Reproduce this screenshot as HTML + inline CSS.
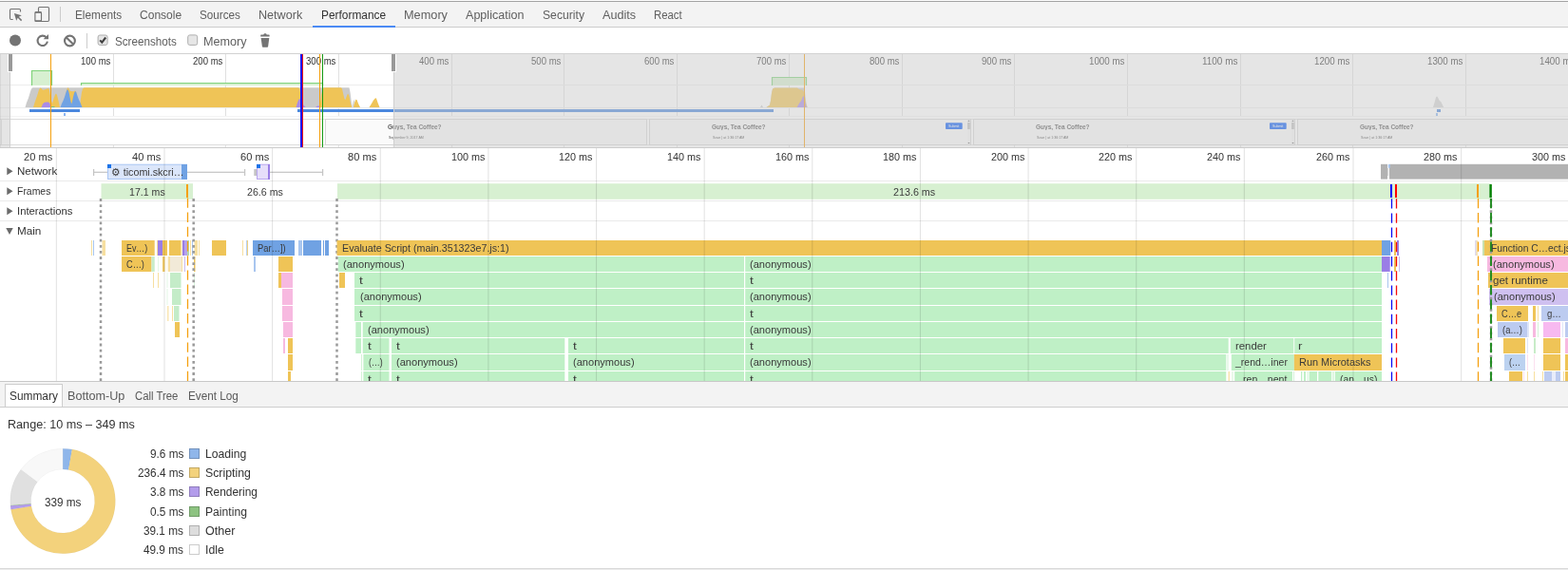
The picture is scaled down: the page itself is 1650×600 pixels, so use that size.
<!DOCTYPE html><html><head><meta charset="utf-8"><title>DevTools Performance</title><style>
html,body{margin:0;padding:0}
body{width:1650px;height:600px;overflow:hidden;position:relative;background:#fff;font-family:"Liberation Sans", sans-serif;font-size:12px;color:#333}
.abs{position:absolute}
.t{position:absolute;white-space:nowrap;line-height:16px}
svg{position:absolute;left:0;top:0;overflow:visible}
svg text{font-family:"Liberation Sans", sans-serif}
</style></head><body><div id="root" style="position:absolute;left:0;top:0;width:1650px;height:600px;overflow:hidden;will-change:transform">
<div class="abs" style="left:0px;top:0px;width:1650px;height:1px;background:#fdfdfd"></div>
<div class="abs" style="left:0px;top:1px;width:1650px;height:1px;background:#a3a3a3"></div>
<div class="abs" style="left:0px;top:2px;width:1650px;height:26px;background:#f3f3f3"></div>
<div class="abs" style="left:0px;top:28px;width:1650px;height:1px;background:#ccc"></div>
<div class="t" style="left:79.20px;top:8.00px;font-size:12.3px;color:#5f5f5f;transform:scaleX(0.9597);transform-origin:0 0">Elements</div>
<div class="t" style="left:147.10px;top:8.00px;font-size:12.3px;color:#5f5f5f;transform:scaleX(0.9795);transform-origin:0 0">Console</div>
<div class="t" style="left:210.00px;top:8.00px;font-size:12.3px;color:#5f5f5f;transform:scaleX(0.9507);transform-origin:0 0">Sources</div>
<div class="t" style="left:272.40px;top:8.00px;font-size:12.3px;color:#5f5f5f;transform:scaleX(1.0242);transform-origin:0 0">Network</div>
<div class="t" style="left:338.30px;top:8.00px;font-size:12.3px;color:#333;transform:scaleX(0.9672);transform-origin:0 0">Performance</div>
<div class="t" style="left:425.20px;top:8.00px;font-size:12.3px;color:#5f5f5f;transform:scaleX(1.0355);transform-origin:0 0">Memory</div>
<div class="t" style="left:490.40px;top:8.00px;font-size:12.3px;color:#5f5f5f;transform:scaleX(1.0221);transform-origin:0 0">Application</div>
<div class="t" style="left:571.00px;top:8.00px;font-size:12.3px;color:#5f5f5f;transform:scaleX(0.9905);transform-origin:0 0">Security</div>
<div class="t" style="left:634.20px;top:8.00px;font-size:12.3px;color:#5f5f5f;transform:scaleX(1.0296);transform-origin:0 0">Audits</div>
<div class="t" style="left:688.10px;top:8.00px;font-size:12.3px;color:#5f5f5f;transform:scaleX(0.9245);transform-origin:0 0">React</div>
<div class="abs" style="left:329px;top:27px;width:87px;height:2px;background:#4a8af4"></div>
<div class="abs" style="left:0px;top:56px;width:1650px;height:1px;background:#d2d2d2"></div>
<div class="t" style="left:120.60px;top:35.50px;font-size:12.3px;color:#5f5f5f;transform:scaleX(0.9479);transform-origin:0 0">Screenshots</div>
<div class="t" style="left:214.10px;top:35.50px;font-size:12.3px;color:#5f5f5f;transform:scaleX(1.0265);transform-origin:0 0">Memory</div>
<svg width="1650" height="56" viewBox="0 0 1650 56">
<path d="M13.700 20.500H11.700Q10.500 20.500 10.500 19.300V10.700Q10.500 9.500 11.700 9.500H20.300Q21.500 9.500 21.500 10.700V12.600" fill="none" stroke="#747474" stroke-width="1.150"/>
<path d="M14.900 13.900 L22.800 16.300 L19.800 17.700 L23.200 21.100 L22.100 22.200 L18.700 18.800 L17.200 21.800 Z" fill="#747474"/>
<rect x="40.500" y="7.500" width="11" height="15" rx="1.200" fill="none" stroke="#747474" stroke-width="1.150"/>
<rect x="36.900" y="12.900" width="6.600" height="9.600" rx="1.200" fill="#f3f3f3" stroke="#747474" stroke-width="1.150"/>
<rect x="36.600" y="12.300" width="7.200" height="1.500" rx="0.600" fill="#747474"/>
<rect x="36.600" y="21.200" width="7.200" height="1.600" rx="0.600" fill="#747474"/>
<rect x="63" y="7" width="1" height="16" fill="#ccc"/>
<circle cx="16" cy="42.600" r="6" fill="#747474"/>
<path d="M48.700 39.400 A5.200 5.200 0 1 0 49.900 43.600" fill="none" stroke="#747474" stroke-width="2.100"/>
<path d="M51 35.900 V41.300 H45.600 Z" fill="#747474"/>
<circle cx="73.450" cy="43" r="5.400" fill="none" stroke="#747474" stroke-width="2.100"/>
<path d="M69.600 39.200 L77.300 46.800" stroke="#747474" stroke-width="2.100"/>
<rect x="91" y="35" width="1" height="16" fill="#ccc"/>
<rect x="103.100" y="37" width="10" height="10.400" rx="2" fill="#e6e6e6" stroke="#aeaeae"/>
<path d="M105.200 42.400 L107.300 44.700 L111.200 39.500" fill="none" stroke="#404040" stroke-width="2.100"/>
<rect x="197.700" y="36.900" width="10" height="10.500" rx="2" fill="#e6e6e6" stroke="#aeaeae"/>
<path d="M274.200 38.400 V36.900 Q274.200 36.400 274.800 36.400 H277.300 Q277.600 35.200 278.600 35.200 H279.400 Q280.400 35.200 280.700 36.400 H283 Q283.600 36.400 283.600 36.900 V38.400 Z" fill="#747474"/>
<path d="M274.600 40 H283.300 L282.100 49 Q282 49.800 281.200 49.800 H276.800 Q276 49.800 275.900 49 Z" fill="#747474"/>
</svg>
<svg width="1650" height="100" viewBox="0 56 1650 100" style="top:56px" shape-rendering="crispEdges">
<rect x="0" y="57" width="1650" height="98" fill="#fff"/>
<rect x="119" y="57" width="1" height="98" fill="#e0e0e0"/>
<rect x="237" y="57" width="1" height="98" fill="#e0e0e0"/>
<rect x="356" y="57" width="1" height="98" fill="#e0e0e0"/>
<rect x="475" y="57" width="1" height="98" fill="#e0e0e0"/>
<rect x="593" y="57" width="1" height="98" fill="#e0e0e0"/>
<rect x="712" y="57" width="1" height="98" fill="#e0e0e0"/>
<rect x="830" y="57" width="1" height="98" fill="#e0e0e0"/>
<rect x="949" y="57" width="1" height="98" fill="#e0e0e0"/>
<rect x="1067" y="57" width="1" height="98" fill="#e0e0e0"/>
<rect x="1186" y="57" width="1" height="98" fill="#e0e0e0"/>
<rect x="1305" y="57" width="1" height="98" fill="#e0e0e0"/>
<rect x="1423" y="57" width="1" height="98" fill="#e0e0e0"/>
<rect x="1542" y="57" width="1" height="98" fill="#e0e0e0"/>
<rect x="1660" y="57" width="1" height="98" fill="#e0e0e0"/>
<rect x="0" y="89" width="1650" height="1" fill="#ededed"/>
<rect x="0" y="113" width="1650" height="1" fill="#ededed"/>
<rect x="0" y="122" width="1650" height="1" fill="#f3f3f3"/>
</svg>
<svg width="1650" height="100" viewBox="0 56 1650 100" style="top:56px">
<path d="M33 90 V74 H55 V90 Z" fill="#d7f0d1"/>
<path d="M33.5 90 V74.5 H54.5 V90" fill="none" stroke="#7fd27a" stroke-width="1.200"/>
<path d="M85 90 V87 H340 V90 Z" fill="#d7f0d1"/>
<path d="M85.5 90 V87.5 H339.5 V90" fill="none" stroke="#7fd27a" stroke-width="1.200"/>
<path d="M812 90 V81 H849 V90 Z" fill="#d7f0d1"/>
<path d="M812.5 90 V81.5 H848.5 V90" fill="none" stroke="#7fd27a" stroke-width="1.200"/>
<path d="M26.500 113 L28 108 L30 103 L31.500 98 L33 93.500 L34.500 92.300 L367.500 92.300 L368.500 97 L370.500 113 Z" fill="#cacaca"/>
<path d="M35 113 L36.500 108 L39 101 L41 94.500 L42.200 92.500 L43.500 93 L45 94.800 L46.500 94.600 L48 94 L50 93.300 L51.500 93.200 L52.500 98 L54 106 L55 109 L56.500 104 L58 99.500 L59 98.500 L60 100 L61.500 106 L63 113 Z" fill="#efc457"/>
<path d="M67 113 L68.500 103 L70 95 L71 92.500 L72 92.500 L73 94.500 L74.200 96 L77.500 96.300 L79 95.600 L80 96.500 L81 100 L82 113 Z" fill="#efc457"/>
<path d="M84 113 L85 104 L86 97 L87 93.500 L88.500 92.300 L314 92.300 L315.300 93.500 L316.500 100 L318 113 Z" fill="#efc457"/>
<path d="M63.500 113 L65 109 L66.500 106 L68 102 L69.500 97 L70.500 94.500 L71.500 94.200 L72.500 97 L73.500 102 L74.500 107 L75.200 109.500 L76 107 L77 102 L78.200 97.500 L79.200 96 L80.200 97 L81.500 101 L83 105 L84.500 108 L86.500 113 Z" fill="#70a2e3"/>
<path d="M43.500 113 L45 109.500 L46.500 108 L48.500 107.600 L51 107.500 L52.500 109 L53.500 113 Z" fill="#a98be8"/>
<path d="M53 113 L54 112 L57 112 L58 113 Z" fill="#7cc07a"/>
<path d="M311.500 113 L313 108 L314.500 104.500 L315.500 104 L317 107 L319 110 L321.500 113 Z" fill="#a98be8"/>
<path d="M332 113 L334 111.500 L336 111.500 L338 113 Z" fill="#a98be8"/>
<path d="M336.500 113 L338 100 L339.500 93.500 L341 92.300 L359 92.300 L360 93.500 L361 98 L362.500 104 L363.500 105 L364.500 102 L366 98.500 L367 100 L368 104 L369 109 L370.500 113 Z" fill="#efc457"/>
<path d="M371 113 L373 108 L374.500 104.800 L375.500 105 L377 109 L379 113 Z M388.500 113 L391 109 L393 105.500 L395 103.200 L396 103.500 L397.500 108 L399.500 113 Z" fill="#efc457"/>
<path d="M370 113 L371.500 107 L373.500 104 L372.500 110 L372 113 Z" fill="#d8d8d8"/>
<path d="M800 113 L801.500 110.500 L803 113 Z" fill="#cacaca"/>
<path d="M806.500 113 L810 110.500 L811 106 L812 98 L813 93.500 L815 92.400 L846 92.400 L847 97 L848 106 L849 111 L850 113 Z" fill="#cacaca"/>
<path d="M806.500 113 L810 110.500 L811 106 L812 98 L813 93.500 L815 92.400 L839 92.400 L841 94 L844.500 94.800 L846 97 L847 102 L848 109 L849 113 Z" fill="#efc457"/>
<path d="M838.500 113 L840 110.500 L841.500 108 L843 106.500 L844.500 102.500 L845.500 100.800 L846.500 104 L847.500 109 L848.500 113 Z" fill="#a98be8"/>
<path d="M1508 113 L1509.500 108 L1511 102.500 L1512 101.300 L1513 102.500 L1514.500 105.500 L1516.500 107.500 L1518 110.500 L1519.200 113 Z" fill="#d4d4d4"/>
</svg>
<svg width="1650" height="100" viewBox="0 56 1650 100" style="top:56px" shape-rendering="crispEdges">
<rect x="31" y="115" width="53" height="3" fill="#4b88de"/>
<rect x="67" y="119" width="2" height="3" fill="#8ab4f0"/>
<rect x="313" y="115" width="501" height="3" fill="#4b88de"/>
<rect x="316" y="119" width="1" height="2" fill="#8ab4f0"/>
<rect x="1512" y="115" width="4" height="3" fill="#4b88de"/>
<rect x="1511" y="119" width="2" height="3" fill="#8ab4f0"/>
<rect x="0" y="123" width="1650" height="32" fill="#fff"/>
<rect x="0" y="125" width="1650" height="1" fill="#e4e4e4"/>
<rect x="0" y="152" width="1650" height="1" fill="#e4e4e4"/>
<rect x="1.500" y="125.500" width="338" height="27" fill="#fff" stroke="#dcdcdc"/>
<g shape-rendering="auto">
<rect x="342.5" y="125.500" width="338" height="27" fill="#fafafa" stroke="#d6d6d6"/>
<rect x="683.5" y="125.500" width="338" height="27" fill="#fafafa" stroke="#d6d6d6"/>
<rect x="1024.5" y="125.500" width="338" height="27" fill="#fafafa" stroke="#d6d6d6"/>
<rect x="1365.5" y="125.500" width="338" height="27" fill="#fafafa" stroke="#d6d6d6"/>
<rect x="995" y="129.300" width="17.700" height="6.800" rx="0.800" fill="#0a5cf5"/>
<rect x="1018.1" y="126.5" width="2.7" height="25.5" fill="#f4f4f4"/>
<rect x="1018.1" y="129" width="2.7" height="7" fill="#bcbcbc"/>
<path d="M1018.3 127.800 l1.200 -1.300 l1.200 1.300 Z M1018.3 150 l1.200 1.300 l1.200 -1.300 Z" fill="#555"/>
<rect x="1336" y="129.300" width="17.700" height="6.800" rx="0.800" fill="#0a5cf5"/>
<rect x="1359.1" y="126.5" width="2.7" height="25.5" fill="#f4f4f4"/>
<rect x="1359.1" y="129" width="2.7" height="7" fill="#bcbcbc"/>
<path d="M1359.3 127.800 l1.200 -1.300 l1.200 1.300 Z M1359.3 150 l1.200 1.300 l1.200 -1.300 Z" fill="#555"/>
</g>
<rect x="119" y="153" width="1" height="2" fill="#e0e0e0"/>
<rect x="237" y="153" width="1" height="2" fill="#e0e0e0"/>
<rect x="356" y="153" width="1" height="2" fill="#e0e0e0"/>
<rect x="475" y="153" width="1" height="2" fill="#e0e0e0"/>
<rect x="593" y="153" width="1" height="2" fill="#e0e0e0"/>
<rect x="712" y="153" width="1" height="2" fill="#e0e0e0"/>
<rect x="830" y="153" width="1" height="2" fill="#e0e0e0"/>
<rect x="949" y="153" width="1" height="2" fill="#e0e0e0"/>
<rect x="1067" y="153" width="1" height="2" fill="#e0e0e0"/>
<rect x="1186" y="153" width="1" height="2" fill="#e0e0e0"/>
<rect x="1305" y="153" width="1" height="2" fill="#e0e0e0"/>
<rect x="1423" y="153" width="1" height="2" fill="#e0e0e0"/>
<rect x="1542" y="153" width="1" height="2" fill="#e0e0e0"/>
<rect x="1660" y="153" width="1" height="2" fill="#e0e0e0"/>
</svg>
<div class="t" style="left:408px;top:129.800px;font-size:13px;line-height:13px;font-weight:bold;color:#555;transform:scale(0.5);transform-origin:0 0">Guys, Tea Coffee?</div>
<div class="t" style="left:409px;top:142.500px;font-size:12px;line-height:12px;color:#444;transform:scale(0.300,0.340);transform-origin:0 0">September 9, 2017 AM</div>
<div class="t" style="left:749px;top:129.800px;font-size:13px;line-height:13px;font-weight:bold;color:#555;transform:scale(0.5);transform-origin:0 0">Guys, Tea Coffee?</div>
<div class="t" style="left:750px;top:142.500px;font-size:12px;line-height:12px;color:#444;transform:scale(0.300,0.340);transform-origin:0 0">Save | at 1:36:17 AM</div>
<div class="t" style="left:998px;top:131px;font-size:12px;line-height:12px;color:#fff;transform:scale(0.3);transform-origin:0 0">Submit</div>
<div class="t" style="left:1090px;top:129.800px;font-size:13px;line-height:13px;font-weight:bold;color:#555;transform:scale(0.5);transform-origin:0 0">Guys, Tea Coffee?</div>
<div class="t" style="left:1091px;top:142.500px;font-size:12px;line-height:12px;color:#444;transform:scale(0.300,0.340);transform-origin:0 0">Save | at 1:36:17 AM</div>
<div class="t" style="left:1339px;top:131px;font-size:12px;line-height:12px;color:#fff;transform:scale(0.3);transform-origin:0 0">Submit</div>
<div class="t" style="left:1431px;top:129.800px;font-size:13px;line-height:13px;font-weight:bold;color:#555;transform:scale(0.5);transform-origin:0 0">Guys, Tea Coffee?</div>
<div class="t" style="left:1432px;top:142.500px;font-size:12px;line-height:12px;color:#444;transform:scale(0.300,0.340);transform-origin:0 0">Save | at 1:36:17 AM</div>
<div class="t" style="left:85.30px;top:55.80px;font-size:10.6px;color:#333;transform:scaleX(0.9036);transform-origin:0 0">100 ms</div>
<div class="t" style="left:203.30px;top:55.80px;font-size:10.6px;color:#333;transform:scaleX(0.9036);transform-origin:0 0">200 ms</div>
<div class="t" style="left:322.30px;top:55.80px;font-size:10.6px;color:#333;transform:scaleX(0.9036);transform-origin:0 0">300 ms</div>
<div class="t" style="left:441.30px;top:55.80px;font-size:10.6px;color:#333;transform:scaleX(0.9036);transform-origin:0 0">400 ms</div>
<div class="t" style="left:559.30px;top:55.80px;font-size:10.6px;color:#333;transform:scaleX(0.9036);transform-origin:0 0">500 ms</div>
<div class="t" style="left:678.30px;top:55.80px;font-size:10.6px;color:#333;transform:scaleX(0.9036);transform-origin:0 0">600 ms</div>
<div class="t" style="left:796.30px;top:55.80px;font-size:10.6px;color:#333;transform:scaleX(0.9036);transform-origin:0 0">700 ms</div>
<div class="t" style="left:915.30px;top:55.80px;font-size:10.6px;color:#333;transform:scaleX(0.9036);transform-origin:0 0">800 ms</div>
<div class="t" style="left:1033.30px;top:55.80px;font-size:10.6px;color:#333;transform:scaleX(0.9036);transform-origin:0 0">900 ms</div>
<div class="t" style="left:1146.30px;top:55.80px;font-size:10.6px;color:#333;transform:scaleX(0.9203);transform-origin:0 0">1000 ms</div>
<div class="t" style="left:1265.30px;top:55.80px;font-size:10.6px;color:#333;transform:scaleX(0.9383);transform-origin:0 0">1100 ms</div>
<div class="t" style="left:1383.30px;top:55.80px;font-size:10.6px;color:#333;transform:scaleX(0.9203);transform-origin:0 0">1200 ms</div>
<div class="t" style="left:1502.30px;top:55.80px;font-size:10.6px;color:#333;transform:scaleX(0.9203);transform-origin:0 0">1300 ms</div>
<div class="t" style="left:1620.30px;top:55.80px;font-size:10.6px;color:#333;transform:scaleX(0.9203);transform-origin:0 0">1400 ms</div>
<div class="abs" style="left:53px;top:57px;width:1.3px;height:98px;background:#f5a010"></div>
<div class="abs" style="left:316px;top:57px;width:2px;height:98px;background:#1414f0"></div>
<div class="abs" style="left:318px;top:57px;width:1.2px;height:98px;background:#f01414"></div>
<div class="abs" style="left:336px;top:57px;width:1.2px;height:98px;background:#f5a010"></div>
<div class="abs" style="left:339px;top:57px;width:1.4px;height:98px;background:#159a15"></div>
<div class="abs" style="left:846px;top:57px;width:1.3px;height:98px;background:#f5a010"></div>
<div class="abs" style="left:0px;top:57px;width:10px;height:98px;background:rgba(202,202,202,0.49)"></div>
<div class="abs" style="left:0px;top:57px;width:1px;height:98px;background:rgba(0,0,0,0.06)"></div>
<div class="abs" style="left:415px;top:57px;width:1235px;height:98px;background:rgba(202,202,202,0.49)"></div>
<div class="abs" style="left:10px;top:57px;width:1px;height:98px;background:#cfcfcf"></div>
<div class="abs" style="left:414px;top:57px;width:1px;height:98px;background:#cfcfcf"></div>
<div class="abs" style="left:8px;top:57px;width:6px;height:19px;background:#fff"></div>
<div class="abs" style="left:9px;top:57px;width:4px;height:18px;background:#999"></div>
<div class="abs" style="left:411px;top:57px;width:6px;height:19px;background:#fff"></div>
<div class="abs" style="left:412px;top:57px;width:4px;height:18px;background:#999"></div>
<div class="abs" style="left:0px;top:155px;width:1650px;height:1px;background:#ccc"></div>
<svg width="1650" height="245" viewBox="0 156 1650 245" style="top:156px">
<rect x="0" y="156" width="1650" height="245" fill="#fff"/>
<rect x="0" y="190" width="1650" height="1" fill="#eaeaea"/>
<rect x="0" y="211" width="1650" height="1" fill="#eaeaea"/>
<rect x="0" y="232" width="1650" height="1" fill="#eaeaea"/>
<rect x="98" y="178" width="1.2" height="7" fill="#c4c4c4"/>
<rect x="98" y="180.7" width="16" height="1.2" fill="#c4c4c4"/>
<rect x="197" y="180.7" width="61" height="1.2" fill="#c4c4c4"/>
<rect x="257" y="178" width="1.2" height="7" fill="#c4c4c4"/>
<rect x="113.500" y="173.200" width="83" height="15.300" fill="#dbe6fa" stroke="#a9c5f3"/>
<rect x="191" y="173" width="6" height="16" fill="#70a2e3"/>
<rect x="113" y="173" width="4" height="4" fill="#1a73e8"/>
<rect x="267.3" y="178" width="2.9" height="7" fill="#c4c4c4"/>
<rect x="284" y="180.7" width="56" height="1.2" fill="#c4c4c4"/>
<rect x="339" y="178" width="1.2" height="7" fill="#c4c4c4"/>
<rect x="270.500" y="173.200" width="13" height="15.300" fill="#e6defa" stroke="#b8a6ee"/>
<rect x="282" y="173" width="2" height="16" fill="#9a7ee6"/>
<rect x="270" y="173" width="4" height="4" fill="#1a73e8"/>
<rect x="1453" y="172.8" width="7" height="15.8" fill="#b2b2b2"/>
<rect x="1462" y="172.8" width="188" height="15.8" fill="#b2b2b2"/>
<rect x="1460.8" y="173" width="2" height="3.8" fill="#a8c6ef"/>
<rect x="1460" y="177" width="1.3" height="8" fill="#d8d8d8"/>
<rect x="106.5" y="193.2" width="96.5" height="16.6" fill="#d7f0d1"/>
<rect x="355" y="193.2" width="1213.7" height="16.6" fill="#d7f0d1"/>
<line x1="354.500" y1="209.100" x2="354.500" y2="401" stroke="#9a9a9a" stroke-width="2.500" stroke-dasharray="2.800,3.300"/>
<rect x="96" y="253" width="1" height="16" fill="#f7dfa0"/>
<rect x="98" y="253" width="1" height="16" fill="#a8c6ef"/>
<rect x="107.5" y="253" width="3.5" height="16" fill="#f7dfa0"/>
<rect x="128" y="253" width="34.7" height="16" fill="#efc457"/>
<rect x="165" y="253" width="1" height="16" fill="#f7dfa0"/>
<rect x="166" y="253" width="5" height="16" fill="#9a7ee6"/>
<rect x="171" y="253" width="5" height="16" fill="#efc457"/>
<rect x="178" y="253" width="12.5" height="16" fill="#efc457"/>
<rect x="190.5" y="253" width="1" height="16" fill="#f7dfa0"/>
<rect x="192" y="253" width="2" height="16" fill="#9a7ee6"/>
<rect x="194" y="253" width="3" height="16" fill="#b5a3ee"/>
<rect x="197" y="253" width="2" height="16" fill="#b8d8a8"/>
<rect x="200" y="253" width="1" height="16" fill="#f7dfa0"/>
<rect x="202" y="253" width="1" height="16" fill="#a8c6ef"/>
<rect x="204.5" y="253" width="3.5" height="16" fill="#f7dfa0"/>
<rect x="209" y="253" width="1" height="16" fill="#f7dfa0"/>
<rect x="223" y="253" width="15" height="16" fill="#efc457"/>
<rect x="255" y="253" width="1" height="16" fill="#f7dfa0"/>
<rect x="259" y="253" width="0.8" height="16" fill="#a8c6ef"/>
<rect x="260" y="253" width="1" height="16" fill="#f0d080"/>
<rect x="266" y="253" width="44" height="16" fill="#70a2e3"/>
<rect x="314" y="253" width="4" height="16" fill="#a8c6ef"/>
<rect x="319" y="253" width="19" height="16" fill="#70a2e3"/>
<rect x="340" y="253" width="1" height="16" fill="#70a2e3"/>
<rect x="342" y="253" width="4" height="16" fill="#70a2e3"/>
<rect x="128" y="270" width="31.5" height="16" fill="#efc457"/>
<rect x="159.5" y="270" width="3.2" height="16" fill="#c8ecc8"/>
<rect x="166" y="270" width="1" height="16" fill="#e4f7e6"/>
<rect x="171" y="270" width="2.5" height="16" fill="#eec868"/>
<rect x="175.5" y="270" width="1" height="16" fill="#faf0d8"/>
<rect x="177" y="270" width="2" height="16" fill="#f7dfa0"/>
<rect x="179" y="270" width="12" height="16" fill="#f2ead8"/>
<rect x="191" y="270" width="1" height="16" fill="#f7dfa0"/>
<rect x="194" y="270" width="1" height="16" fill="#c9baf1"/>
<rect x="204" y="270" width="1.5" height="16" fill="#efc457"/>
<rect x="267" y="270" width="2" height="16" fill="#a8c6ef"/>
<rect x="293" y="270" width="15" height="16" fill="#efc457"/>
<rect x="161" y="287" width="1" height="16" fill="#f7dfa0"/>
<rect x="166" y="287" width="1" height="16" fill="#f7dfa0"/>
<rect x="175.5" y="287" width="1" height="16" fill="#e4f7e6"/>
<rect x="179" y="287" width="11.5" height="16" fill="#c4ecc8"/>
<rect x="204" y="287" width="1" height="16" fill="#d8f4dc"/>
<rect x="293" y="287" width="3" height="16" fill="#efc457"/>
<rect x="296" y="287" width="12" height="16" fill="#f7b9e0"/>
<rect x="175.5" y="304" width="1" height="17" fill="#e4f7e6"/>
<rect x="181" y="304" width="9.5" height="17" fill="#c4ecc8"/>
<rect x="297" y="304" width="11" height="17" fill="#f7b9e0"/>
<rect x="176" y="322" width="1.5" height="16" fill="#fae6b4"/>
<rect x="181" y="322" width="1" height="16" fill="#f7dfa0"/>
<rect x="183" y="322" width="5.5" height="16" fill="#c4ecc8"/>
<rect x="297" y="322" width="11" height="16" fill="#f7b9e0"/>
<rect x="184" y="339" width="5" height="16" fill="#efc457"/>
<rect x="298" y="339" width="10" height="16" fill="#f7b9e0"/>
<rect x="298" y="356" width="2" height="16" fill="#f7b9e0"/>
<rect x="303" y="356" width="5" height="16" fill="#efc457"/>
<rect x="303" y="373" width="5" height="17" fill="#efc457"/>
<rect x="303" y="391" width="3" height="10" fill="#efc457"/>
<rect x="354.5" y="253" width="1099.5" height="16" fill="#efc457"/>
<rect x="355.8" y="270" width="427.2" height="16" fill="#bff0c6"/>
<rect x="784.2" y="270" width="669.8" height="16" fill="#bff0c6"/>
<rect x="357" y="287" width="6" height="16" fill="#efc457"/>
<rect x="373" y="287" width="410" height="16" fill="#bff0c6"/>
<rect x="784.2" y="287" width="669.8" height="16" fill="#bff0c6"/>
<rect x="373" y="304" width="410" height="17" fill="#bff0c6"/>
<rect x="784.2" y="304" width="669.8" height="17" fill="#bff0c6"/>
<rect x="373" y="322" width="410" height="16" fill="#bff0c6"/>
<rect x="784.2" y="322" width="669.8" height="16" fill="#bff0c6"/>
<rect x="374.3" y="339" width="5.7" height="16" fill="#bff0c6"/>
<rect x="381.7" y="339" width="401.3" height="16" fill="#bff0c6"/>
<rect x="784.2" y="339" width="669.8" height="16" fill="#bff0c6"/>
<rect x="374.3" y="356" width="5.7" height="16" fill="#bff0c6"/>
<rect x="381.7" y="356" width="27.8" height="16" fill="#bff0c6"/>
<rect x="412" y="356" width="182.3" height="16" fill="#bff0c6"/>
<rect x="598" y="356" width="185" height="16" fill="#bff0c6"/>
<rect x="784.2" y="356" width="508.5" height="16" fill="#bff0c6"/>
<rect x="1294.8" y="356" width="66.5" height="16" fill="#bff0c6"/>
<rect x="1362.2" y="356" width="91.8" height="16" fill="#bff0c6"/>
<rect x="380" y="373" width="1" height="17" fill="#d4f3d8"/>
<rect x="382.4" y="373" width="27.1" height="17" fill="#bff0c6"/>
<rect x="412" y="373" width="182.3" height="17" fill="#bff0c6"/>
<rect x="598" y="373" width="185" height="17" fill="#bff0c6"/>
<rect x="784.2" y="373" width="506.1" height="17" fill="#bff0c6"/>
<rect x="1291.5" y="373" width="1" height="17" fill="#d4f3d8"/>
<rect x="1295.8" y="373" width="66" height="17" fill="#bff0c6"/>
<rect x="1361.8" y="373" width="92.2" height="17" fill="#efc457"/>
<rect x="380" y="391" width="1" height="10" fill="#d4f3d8"/>
<rect x="382.4" y="391" width="27.1" height="10" fill="#bff0c6"/>
<rect x="412" y="391" width="182.3" height="10" fill="#bff0c6"/>
<rect x="598" y="391" width="185" height="10" fill="#bff0c6"/>
<rect x="784.2" y="391" width="506.1" height="10" fill="#bff0c6"/>
<rect x="1292.7" y="391" width="0.9" height="10" fill="#f3d27a"/>
<rect x="1296.5" y="391" width="1" height="10" fill="#d4f3d8"/>
<rect x="1299.2" y="391" width="60.8" height="10" fill="#bff0c6"/>
<rect x="1361" y="391" width="1" height="10" fill="#d4f3d8"/>
<rect x="1369" y="391" width="1.3" height="10" fill="#bff0c6"/>
<rect x="1372" y="391" width="2" height="10" fill="#bff0c6"/>
<rect x="1375.5" y="391" width="1" height="10" fill="#d4f3d8"/>
<rect x="1377.6" y="391" width="8.4" height="10" fill="#bff0c6"/>
<rect x="1387.3" y="391" width="13.9" height="10" fill="#bff0c6"/>
<rect x="1402.5" y="391" width="1" height="10" fill="#bff0c6"/>
<rect x="1404.8" y="391" width="49.2" height="10" fill="#bff0c6"/>
<rect x="1454" y="253" width="9.3" height="16" fill="#70a2e3"/>
<rect x="1467" y="253" width="2" height="16" fill="#efc457"/>
<rect x="1470" y="253" width="2" height="16" fill="#9a7ee6"/>
<rect x="1454" y="270" width="8.7" height="16" fill="#9a7ee6"/>
<rect x="1467" y="270" width="2" height="16" fill="#efc457"/>
<rect x="1472" y="270" width="1" height="16" fill="#c9baf1"/>
<rect x="1460" y="287" width="1" height="16" fill="#a8c6ef"/>
<rect x="1552.5" y="253" width="1" height="16" fill="#c0b8e8"/>
<rect x="1553.5" y="253" width="1.3" height="16" fill="#f7dfa0"/>
<rect x="1560" y="253" width="2" height="16" fill="#c8e0b0"/>
<rect x="1562" y="253" width="88" height="16" fill="#efc457"/>
<rect x="1565" y="270" width="85" height="16" fill="#f7b9e0"/>
<rect x="1566" y="287" width="84" height="16" fill="#efc457"/>
<rect x="1567" y="304" width="83" height="17" fill="#cfc0f0"/>
<rect x="1575" y="322" width="33" height="16" fill="#efc457"/>
<rect x="1613" y="322" width="3" height="16" fill="#efc457"/>
<rect x="1618" y="322" width="1" height="16" fill="#f7dfa0"/>
<rect x="1622" y="322" width="28" height="16" fill="#bccbf0"/>
<rect x="1576" y="339" width="31" height="16" fill="#bccbf0"/>
<rect x="1607" y="339" width="2" height="16" fill="#dfe6f8"/>
<rect x="1613" y="339" width="3" height="16" fill="#f7b9e0"/>
<rect x="1618" y="339" width="1" height="16" fill="#d4f3d8"/>
<rect x="1624" y="339" width="18" height="16" fill="#f7b9f0"/>
<rect x="1644" y="339" width="1" height="16" fill="#dfe6f8"/>
<rect x="1647" y="339" width="3" height="16" fill="#bccbf0"/>
<rect x="1582" y="356" width="23" height="16" fill="#efc457"/>
<rect x="1607" y="356" width="1" height="16" fill="#dfe6f8"/>
<rect x="1614" y="356" width="2" height="16" fill="#c8ecc8"/>
<rect x="1624" y="356" width="18" height="16" fill="#efc457"/>
<rect x="1647" y="356" width="3" height="16" fill="#f7b9e0"/>
<rect x="1583" y="373" width="22" height="17" fill="#bcd2f0"/>
<rect x="1607" y="373" width="1" height="17" fill="#fbe0f0"/>
<rect x="1614" y="373" width="1" height="17" fill="#fbe0f0"/>
<rect x="1624" y="373" width="18" height="17" fill="#efc457"/>
<rect x="1647" y="373" width="3" height="17" fill="#efc457"/>
<rect x="1588" y="391" width="14" height="10" fill="#efc457"/>
<rect x="1603" y="391" width="1" height="10" fill="#fbe0f0"/>
<rect x="1607" y="391" width="1" height="10" fill="#f7dfa0"/>
<rect x="1614" y="391" width="1" height="10" fill="#f7dfa0"/>
<rect x="1623" y="391" width="1" height="10" fill="#f7dfa0"/>
<rect x="1625" y="391" width="8" height="10" fill="#bccbf0"/>
<rect x="1633" y="391" width="4" height="10" fill="#e8ecfa"/>
<rect x="1637" y="391" width="5" height="10" fill="#bccbf0"/>
<rect x="1645" y="391" width="1" height="10" fill="#f7dfa0"/>
<rect x="1647" y="391" width="3" height="10" fill="#efc457"/>
<rect x="58.8" y="156" width="1.1" height="245" fill="#000" fill-opacity="0.110"/>
<rect x="172.44" y="156" width="1.1" height="245" fill="#000" fill-opacity="0.110"/>
<rect x="286.07" y="156" width="1.1" height="245" fill="#000" fill-opacity="0.110"/>
<rect x="399.71" y="156" width="1.1" height="245" fill="#000" fill-opacity="0.110"/>
<rect x="513.34" y="156" width="1.1" height="245" fill="#000" fill-opacity="0.110"/>
<rect x="626.98" y="156" width="1.1" height="245" fill="#000" fill-opacity="0.110"/>
<rect x="740.62" y="156" width="1.1" height="245" fill="#000" fill-opacity="0.110"/>
<rect x="854.25" y="156" width="1.1" height="245" fill="#000" fill-opacity="0.110"/>
<rect x="967.89" y="156" width="1.1" height="245" fill="#000" fill-opacity="0.110"/>
<rect x="1081.52" y="156" width="1.1" height="245" fill="#000" fill-opacity="0.110"/>
<rect x="1195.16" y="156" width="1.1" height="245" fill="#000" fill-opacity="0.110"/>
<rect x="1308.79" y="156" width="1.1" height="245" fill="#000" fill-opacity="0.110"/>
<rect x="1423.44" y="156" width="1.1" height="245" fill="#000" fill-opacity="0.110"/>
<rect x="1537.08" y="156" width="1.1" height="245" fill="#000" fill-opacity="0.110"/>
<rect x="1650.71" y="156" width="1.1" height="245" fill="#000" fill-opacity="0.110"/>
<rect x="196" y="194" width="2" height="14" fill="#f5a010"/>
<rect x="1463" y="194" width="2" height="14" fill="#0000ff"/>
<rect x="1468" y="194" width="2" height="14" fill="#ff0000"/>
<rect x="1554" y="194" width="2" height="14" fill="#f5a010"/>
<rect x="1567.4" y="194" width="2.4" height="14" fill="#008000"/>
</svg>
<svg width="1650" height="245" viewBox="0 156 1650 245" style="top:156px">
<line x1="106" y1="209.100" x2="106" y2="401" stroke="#9a9a9a" stroke-width="2.500" stroke-dasharray="2.800,3.300"/>
<line x1="203.7" y1="209.100" x2="203.7" y2="401" stroke="#9a9a9a" stroke-width="2.500" stroke-dasharray="2.800,3.300"/>
<line x1="1569" y1="209.100" x2="1569" y2="401" stroke="#9a9a9a" stroke-width="2.500" stroke-dasharray="2.800,3.300"/>
<line x1="197.5" y1="208.4" x2="197.5" y2="401" stroke="#f5a010" stroke-width="1.3" stroke-dasharray="10.400,4.800"/>
<line x1="1464.5" y1="209.2" x2="1464.5" y2="401" stroke="#0a0af5" stroke-width="1.3" stroke-dasharray="10.400,4.800"/>
<line x1="1469.5" y1="209.2" x2="1469.5" y2="401" stroke="#f50a0a" stroke-width="1.3" stroke-dasharray="10.400,4.800"/>
<line x1="1555.5" y1="208.8" x2="1555.5" y2="401" stroke="#f5a010" stroke-width="1.3" stroke-dasharray="10.400,4.800"/>
<line x1="1569" y1="208.8" x2="1569" y2="401" stroke="#1e8a1e" stroke-width="1.9" stroke-dasharray="10.400,4.800"/>
</svg>
<div class="t" style="left:25.25px;top:157.00px;font-size:11.5px;color:#333;transform:scaleX(0.9640);transform-origin:0 0">20 ms</div>
<div class="t" style="left:138.89px;top:157.00px;font-size:11.5px;color:#333;transform:scaleX(0.9640);transform-origin:0 0">40 ms</div>
<div class="t" style="left:252.52px;top:157.00px;font-size:11.5px;color:#333;transform:scaleX(0.9640);transform-origin:0 0">60 ms</div>
<div class="t" style="left:366.16px;top:157.00px;font-size:11.5px;color:#333;transform:scaleX(0.9640);transform-origin:0 0">80 ms</div>
<div class="t" style="left:474.59px;top:157.00px;font-size:11.5px;color:#333;transform:scaleX(0.9385);transform-origin:0 0">100 ms</div>
<div class="t" style="left:588.23px;top:157.00px;font-size:11.5px;color:#333;transform:scaleX(0.9385);transform-origin:0 0">120 ms</div>
<div class="t" style="left:701.87px;top:157.00px;font-size:11.5px;color:#333;transform:scaleX(0.9385);transform-origin:0 0">140 ms</div>
<div class="t" style="left:815.50px;top:157.00px;font-size:11.5px;color:#333;transform:scaleX(0.9385);transform-origin:0 0">160 ms</div>
<div class="t" style="left:929.14px;top:157.00px;font-size:11.5px;color:#333;transform:scaleX(0.9385);transform-origin:0 0">180 ms</div>
<div class="t" style="left:1042.77px;top:157.00px;font-size:11.5px;color:#333;transform:scaleX(0.9385);transform-origin:0 0">200 ms</div>
<div class="t" style="left:1156.41px;top:157.00px;font-size:11.5px;color:#333;transform:scaleX(0.9385);transform-origin:0 0">220 ms</div>
<div class="t" style="left:1270.04px;top:157.00px;font-size:11.5px;color:#333;transform:scaleX(0.9385);transform-origin:0 0">240 ms</div>
<div class="t" style="left:1384.69px;top:157.00px;font-size:11.5px;color:#333;transform:scaleX(0.9385);transform-origin:0 0">260 ms</div>
<div class="t" style="left:1498.33px;top:157.00px;font-size:11.5px;color:#333;transform:scaleX(0.9385);transform-origin:0 0">280 ms</div>
<div class="t" style="left:1611.96px;top:157.00px;font-size:11.5px;color:#333;transform:scaleX(0.9385);transform-origin:0 0">300 ms</div>
<svg width="10" height="10" style="left:7px;top:175.7px"><path d="M0.300 0.300 V8.300 L6.500 4.300 Z" fill="#6a6a6a"/></svg>
<div class="t" style="left:18.00px;top:172.00px;font-size:11.5px;color:#333">Network</div>
<svg width="10" height="10" style="left:7px;top:196.7px"><path d="M0.300 0.300 V8.300 L6.500 4.300 Z" fill="#6a6a6a"/></svg>
<div class="t" style="left:18.00px;top:193.00px;font-size:11.5px;color:#333;transform:scaleX(0.9081);transform-origin:0 0">Frames</div>
<svg width="10" height="10" style="left:7px;top:217.7px"><path d="M0.300 0.300 V8.300 L6.500 4.300 Z" fill="#6a6a6a"/></svg>
<div class="t" style="left:18.00px;top:214.00px;font-size:11.5px;color:#333;transform:scaleX(0.9823);transform-origin:0 0">Interactions</div>
<svg width="10" height="10" style="left:6px;top:239px"><path d="M0.300 1 H7.700 L4 8 Z" fill="#6a6a6a"/></svg>
<div class="t" style="left:18.00px;top:235.00px;font-size:11.5px;color:#333;transform:scaleX(1.0185);transform-origin:0 0">Main</div>
<div class="t" style="left:117.00px;top:173.00px;font-size:11px;color:#3a3a3a;transform:scaleX(0.9738);transform-origin:0 0">⚙ ticomi.skcri…</div>
<div class="t" style="left:136.00px;top:194.00px;font-size:11px;color:#3a3a3a;transform:scaleX(0.9632);transform-origin:0 0">17.1 ms</div>
<div class="t" style="left:260.00px;top:194.00px;font-size:11px;color:#3a3a3a;transform:scaleX(0.9683);transform-origin:0 0">26.6 ms</div>
<div class="t" style="left:939.70px;top:194.00px;font-size:11px;color:#3a3a3a;transform:scaleX(0.9768);transform-origin:0 0">213.6 ms</div>
<div class="t" style="left:133.20px;top:253.00px;font-size:11px;color:#3a3a3a;transform:scaleX(0.8073);transform-origin:0 0">Ev…)</div>
<div class="t" style="left:132.50px;top:270.00px;font-size:11px;color:#3a3a3a;transform:scaleX(0.8359);transform-origin:0 0">C…)</div>
<div class="t" style="left:271.10px;top:253.00px;font-size:11px;color:#3a3a3a;transform:scaleX(0.8524);transform-origin:0 0">Par…])</div>
<div class="t" style="left:359.90px;top:253.00px;font-size:11px;color:#3a3a3a;transform:scaleX(0.9734);transform-origin:0 0">Evaluate Script (main.351323e7.js:1)</div>
<div class="t" style="left:361.00px;top:270.00px;font-size:11px;color:#3a3a3a;transform:scaleX(1.0062);transform-origin:0 0">(anonymous)</div>
<div class="t" style="left:789.00px;top:270.00px;font-size:11px;color:#3a3a3a;transform:scaleX(1.0062);transform-origin:0 0">(anonymous)</div>
<div class="t" style="left:378.20px;top:287.00px;font-size:11px;color:#3a3a3a;transform:scaleX(1.2500);transform-origin:0 0">t</div>
<div class="t" style="left:789.00px;top:287.00px;font-size:11px;color:#3a3a3a;transform:scaleX(1.2500);transform-origin:0 0">t</div>
<div class="t" style="left:378.50px;top:304.00px;font-size:11px;color:#3a3a3a;transform:scaleX(1.0062);transform-origin:0 0">(anonymous)</div>
<div class="t" style="left:789.00px;top:304.00px;font-size:11px;color:#3a3a3a;transform:scaleX(1.0062);transform-origin:0 0">(anonymous)</div>
<div class="t" style="left:378.20px;top:322.00px;font-size:11px;color:#3a3a3a;transform:scaleX(1.2500);transform-origin:0 0">t</div>
<div class="t" style="left:789.00px;top:322.00px;font-size:11px;color:#3a3a3a;transform:scaleX(1.2500);transform-origin:0 0">t</div>
<div class="t" style="left:386.70px;top:339.00px;font-size:11px;color:#3a3a3a;transform:scaleX(1.0062);transform-origin:0 0">(anonymous)</div>
<div class="t" style="left:789.00px;top:339.00px;font-size:11px;color:#3a3a3a;transform:scaleX(1.0062);transform-origin:0 0">(anonymous)</div>
<div class="t" style="left:386.50px;top:356.00px;font-size:11px;color:#3a3a3a;transform:scaleX(1.2500);transform-origin:0 0">t</div>
<div class="t" style="left:416.70px;top:356.00px;font-size:11px;color:#3a3a3a;transform:scaleX(1.2500);transform-origin:0 0">t</div>
<div class="t" style="left:602.50px;top:356.00px;font-size:11px;color:#3a3a3a;transform:scaleX(1.2500);transform-origin:0 0">t</div>
<div class="t" style="left:789.00px;top:356.00px;font-size:11px;color:#3a3a3a;transform:scaleX(1.2500);transform-origin:0 0">t</div>
<div class="t" style="left:1299.50px;top:356.00px;font-size:11px;color:#3a3a3a;transform:scaleX(1.0347);transform-origin:0 0">render</div>
<div class="t" style="left:1366.00px;top:356.00px;font-size:11px;color:#3a3a3a;transform:scaleX(1.1983);transform-origin:0 0">r</div>
<div class="t" style="left:388.20px;top:373.00px;font-size:11px;color:#3a3a3a;transform:scaleX(0.7966);transform-origin:0 0">(…)</div>
<div class="t" style="left:417.00px;top:373.00px;font-size:11px;color:#3a3a3a;transform:scaleX(1.0062);transform-origin:0 0">(anonymous)</div>
<div class="t" style="left:602.50px;top:373.00px;font-size:11px;color:#3a3a3a;transform:scaleX(1.0062);transform-origin:0 0">(anonymous)</div>
<div class="t" style="left:789.00px;top:373.00px;font-size:11px;color:#3a3a3a;transform:scaleX(1.0062);transform-origin:0 0">(anonymous)</div>
<div class="t" style="left:1299.50px;top:373.00px;font-size:11px;color:#3a3a3a;transform:scaleX(0.9550);transform-origin:0 0">_rend…iner</div>
<div class="t" style="left:1366.50px;top:373.00px;font-size:11px;color:#3a3a3a;transform:scaleX(0.9948);transform-origin:0 0">Run Microtasks</div>
<div class="t" style="left:386.50px;top:391.00px;font-size:11px;color:#3a3a3a;transform:scaleX(1.2500);transform-origin:0 0">t</div>
<div class="t" style="left:416.70px;top:391.00px;font-size:11px;color:#3a3a3a;transform:scaleX(1.2500);transform-origin:0 0">t</div>
<div class="t" style="left:602.50px;top:391.00px;font-size:11px;color:#3a3a3a;transform:scaleX(1.2500);transform-origin:0 0">t</div>
<div class="t" style="left:789.00px;top:391.00px;font-size:11px;color:#3a3a3a;transform:scaleX(1.2500);transform-origin:0 0">t</div>
<div class="t" style="left:1308.00px;top:391.00px;font-size:11px;color:#3a3a3a;transform:scaleX(0.9604);transform-origin:0 0">ren…nent</div>
<div class="t" style="left:1409.50px;top:391.00px;font-size:11px;color:#3a3a3a;transform:scaleX(0.9339);transform-origin:0 0">(an…us)</div>
<div class="t" style="left:1569.00px;top:253.00px;font-size:11px;color:#3a3a3a;transform:scaleX(0.9335);transform-origin:0 0;width:86.8px;overflow:hidden">Function C…ect.js</div>
<div class="t" style="left:1571.20px;top:270.00px;font-size:11px;color:#3a3a3a;transform:scaleX(1.0062);transform-origin:0 0;width:78.5px;overflow:hidden">(anonymous)</div>
<div class="t" style="left:1571.20px;top:287.00px;font-size:11px;color:#3a3a3a;transform:scaleX(1.0521);transform-origin:0 0;width:74.1px;overflow:hidden">get runtime</div>
<div class="t" style="left:1571.50px;top:304.00px;font-size:11px;color:#3a3a3a;transform:scaleX(1.0062);transform-origin:0 0;width:77.5px;overflow:hidden">(anonymous)</div>
<div class="t" style="left:1579.50px;top:322.00px;font-size:11px;color:#3a3a3a;transform:scaleX(0.8419);transform-origin:0 0">C…e</div>
<div class="t" style="left:1627.50px;top:322.00px;font-size:11px;color:#3a3a3a;transform:scaleX(0.8701);transform-origin:0 0">g…</div>
<div class="t" style="left:1581.00px;top:339.00px;font-size:11px;color:#3a3a3a;transform:scaleX(0.8547);transform-origin:0 0">(a…)</div>
<div class="t" style="left:1588.00px;top:373.00px;font-size:11px;color:#3a3a3a;transform:scaleX(0.8111);transform-origin:0 0">(…</div>
<div class="abs" style="left:0px;top:401px;width:1650px;height:1px;background:#c8c8c8"></div>
<div class="abs" style="left:0px;top:402px;width:1650px;height:26px;background:#f3f3f3"></div>
<div class="abs" style="left:0px;top:428px;width:1650px;height:1px;background:#cdcdcd"></div>
<div class="abs" style="left:5px;top:404px;width:61px;height:25px;background:#fff;border:1px solid #cdcdcd;box-sizing:border-box"></div>
<div class="t" style="left:10.00px;top:409.30px;font-size:12.3px;color:#333;transform:scaleX(0.9672);transform-origin:0 0">Summary</div>
<div class="t" style="left:71.00px;top:409.30px;font-size:12.3px;color:#5a5a5a;transform:scaleX(1.0275);transform-origin:0 0">Bottom-Up</div>
<div class="t" style="left:142.00px;top:409.30px;font-size:12.3px;color:#5a5a5a;transform:scaleX(0.9224);transform-origin:0 0">Call Tree</div>
<div class="t" style="left:198.00px;top:409.30px;font-size:12.3px;color:#5a5a5a;transform:scaleX(0.9550);transform-origin:0 0">Event Log</div>
<div class="t" style="left:8.00px;top:439.30px;font-size:12.3px;color:#333;transform:scaleX(1.0256);transform-origin:0 0">Range: 10 ms – 349 ms</div>
<svg width="140" height="130" viewBox="0 465 140 130" style="top:465px">
<path d="M66.10 472.20 A55.30 55.30 0 0 1 75.88 473.07 L72.04 494.43 A33.60 33.60 0 0 0 66.10 493.90 Z" fill="#8fb6ea" stroke="rgba(0,0,0,0.05)" stroke-width="0.600"/>
<path d="M75.88 473.07 A55.30 55.30 0 1 1 11.48 536.14 L32.91 532.75 A33.60 33.60 0 1 0 72.04 494.43 Z" fill="#f3d27c" stroke="rgba(0,0,0,0.05)" stroke-width="0.600"/>
<path d="M11.48 536.14 A55.30 55.30 0 0 1 11.01 532.28 L32.63 530.41 A33.60 33.60 0 0 0 32.91 532.75 Z" fill="#b39ceb" stroke="rgba(0,0,0,0.05)" stroke-width="0.600"/>
<path d="M11.01 532.28 A55.30 55.30 0 0 1 10.97 531.77 L32.60 530.10 A33.60 33.60 0 0 0 32.63 530.41 Z" fill="#8dc381" stroke="rgba(0,0,0,0.05)" stroke-width="0.600"/>
<path d="M10.97 531.77 A55.30 55.30 0 0 1 21.97 494.18 L39.29 507.25 A33.60 33.60 0 0 0 32.60 530.10 Z" fill="#e0e0e0" stroke="rgba(0,0,0,0.05)" stroke-width="0.600"/>
<path d="M21.97 494.18 A55.30 55.30 0 0 1 66.10 472.20 L66.10 493.90 A33.60 33.60 0 0 0 39.29 507.25 Z" fill="#f8f8f8" stroke="rgba(0,0,0,0.05)" stroke-width="0.600"/>
</svg>
<div class="t" style="left:47.00px;top:521.00px;font-size:12.3px;color:#333;transform:scaleX(0.9522);transform-origin:0 0">339 ms</div>
<div class="t" style="left:157.50px;top:470.00px;font-size:12.3px;color:#333;transform:scaleX(0.9592);transform-origin:0 0">9.6 ms</div>
<div class="abs" style="left:199px;top:472px;width:11px;height:11px;background:#8fb6ea;box-sizing:border-box;border:1px solid rgba(0,0,0,0.2)"></div>
<div class="t" style="left:216.00px;top:470.00px;font-size:12.3px;color:#333;transform:scaleX(0.9913);transform-origin:0 0">Loading</div>
<div class="t" style="left:144.50px;top:490.00px;font-size:12.3px;color:#333;transform:scaleX(0.9566);transform-origin:0 0">236.4 ms</div>
<div class="abs" style="left:199px;top:492px;width:11px;height:11px;background:#f3d27c;box-sizing:border-box;border:1px solid rgba(0,0,0,0.2)"></div>
<div class="t" style="left:216.00px;top:490.00px;font-size:12.3px;color:#333">Scripting</div>
<div class="t" style="left:157.50px;top:510.00px;font-size:12.3px;color:#333;transform:scaleX(0.9592);transform-origin:0 0">3.8 ms</div>
<div class="abs" style="left:199px;top:512px;width:11px;height:11px;background:#b39ceb;box-sizing:border-box;border:1px solid rgba(0,0,0,0.2)"></div>
<div class="t" style="left:216.00px;top:510.00px;font-size:12.3px;color:#333;transform:scaleX(0.9674);transform-origin:0 0">Rendering</div>
<div class="t" style="left:157.50px;top:531.00px;font-size:12.3px;color:#333;transform:scaleX(0.9592);transform-origin:0 0">0.5 ms</div>
<div class="abs" style="left:199px;top:533px;width:11px;height:11px;background:#8dc381;box-sizing:border-box;border:1px solid rgba(0,0,0,0.2)"></div>
<div class="t" style="left:216.00px;top:531.00px;font-size:12.3px;color:#333;transform:scaleX(0.9876);transform-origin:0 0">Painting</div>
<div class="t" style="left:151.00px;top:551.00px;font-size:12.3px;color:#333;transform:scaleX(0.9577);transform-origin:0 0">39.1 ms</div>
<div class="abs" style="left:199px;top:553px;width:11px;height:11px;background:#dddddd;box-sizing:border-box;border:1px solid rgba(0,0,0,0.2)"></div>
<div class="t" style="left:216.00px;top:551.00px;font-size:12.3px;color:#333;transform:scaleX(1.0206);transform-origin:0 0">Other</div>
<div class="t" style="left:151.00px;top:571.00px;font-size:12.3px;color:#333;transform:scaleX(0.9577);transform-origin:0 0">49.9 ms</div>
<div class="abs" style="left:199px;top:573px;width:11px;height:11px;background:#ffffff;box-sizing:border-box;border:1px solid rgba(0,0,0,0.2)"></div>
<div class="t" style="left:216.00px;top:571.00px;font-size:12.3px;color:#333">Idle</div>
<div class="abs" style="left:0px;top:598px;width:1650px;height:1px;background:#d8d8d8"></div>
<div class="abs" style="left:0px;top:599px;width:1650px;height:1px;background:#ececec"></div>
</div></body></html>
